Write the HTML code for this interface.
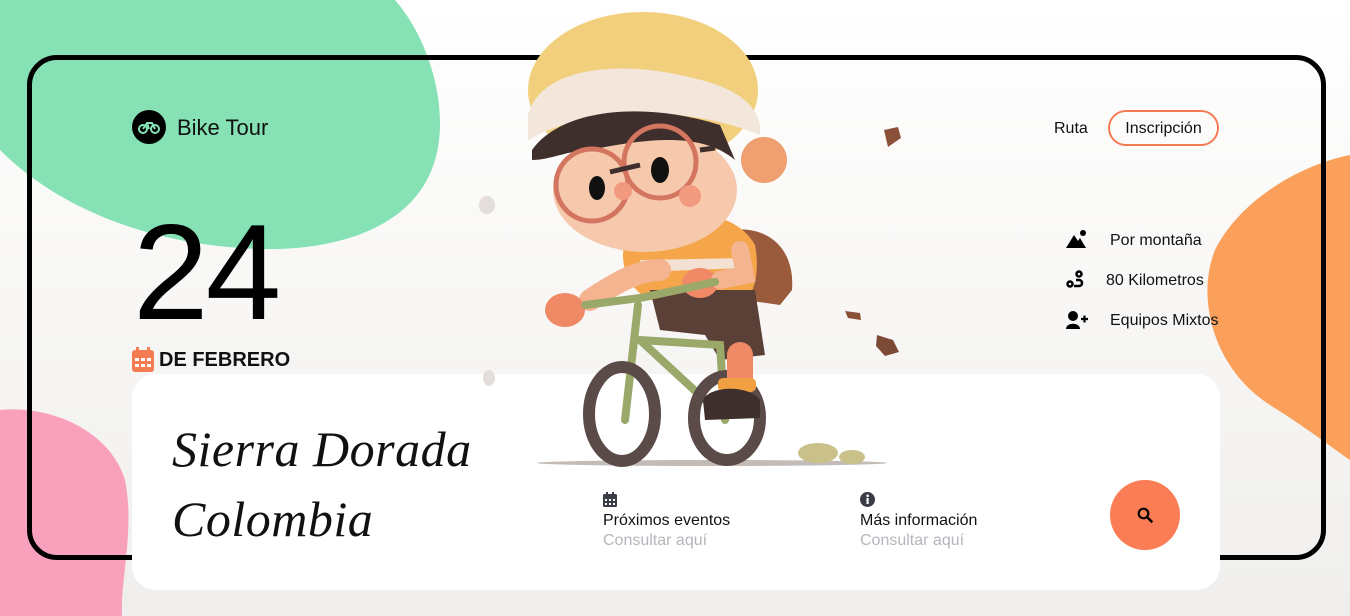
<!DOCTYPE html>
<html><head><meta charset="utf-8"><style>
*{margin:0;padding:0;box-sizing:border-box}
body{width:1350px;height:616px;overflow:hidden;position:relative;font-family:"Liberation Sans","DejaVu Sans",sans-serif;background:linear-gradient(#ffffff 0%,#f6f5f3 60%,#efeeec 100%);color:#111}
.abs{position:absolute}
.frame{left:27px;top:55px;width:1299px;height:505px;border:5px solid #000;border-radius:30px}
.card{left:132px;top:374px;width:1088px;height:216px;background:#fff;border-radius:24px}
.script{font-family:"Liberation Serif",serif;font-style:italic;font-size:50px;color:#111;letter-spacing:0.5px}
.lbl{font-size:16px;color:#111}
.sub{font-size:16px;color:#b3b6bb}
</style></head><body>
<svg class="abs" style="left:0;top:0" width="1350" height="616">
<path d="M0 0 L395 0 C430 40 450 110 435 160 C415 230 330 255 240 248 C150 242 60 210 0 150 Z" fill="#86e1b5"/>
<path d="M1350 155 C1300 165 1240 200 1215 250 C1195 300 1215 370 1270 405 C1310 430 1335 450 1350 460 Z" fill="#fba05a"/>
<path d="M0 410 C50 405 110 430 125 480 C135 530 120 580 122 616 L0 616 Z" fill="#f8a0bc"/>
</svg>
<div class="abs frame"></div>
<div class="abs card"></div>
<svg class="abs" style="left:0;top:0" width="1350" height="616">
<ellipse cx="712" cy="463" rx="175" ry="3" fill="#9a8d85" opacity=".6"/>
<ellipse cx="818" cy="453" rx="20" ry="10" fill="#c9c08a"/>
<ellipse cx="852" cy="457" rx="13" ry="7" fill="#c9c08a"/>
<path d="M884 130 L898 127 L901 138 L888 147Z" fill="#8a5038"/>
<path d="M845 311 L860 313 L861 320 L848 318Z" fill="#8a5038"/>
<path d="M877 335 L893 340 L899 352 L885 356 L876 346Z" fill="#7d4a36"/>
<ellipse cx="487" cy="205" rx="8" ry="9" fill="#e3dedb"/>
<ellipse cx="489" cy="378" rx="6" ry="8" fill="#e3dedb"/>
<path d="M730 230 C770 225 795 250 792 290 L780 305 L745 300 Z" fill="#9a5a3c"/>
<path d="M635 225 C680 205 735 210 755 245 C760 270 755 300 740 300 L650 300 C620 285 615 245 635 225Z" fill="#f5a64a"/>
<path d="M640 260 L745 258 L745 268 L640 272Z" fill="#f3e2d4"/>
<path d="M650 290 L755 290 L765 355 L720 360 L705 335 L660 330Z" fill="#5b4038"/>
<path d="M590 300 C620 280 640 270 660 270" stroke="#f4b490" stroke-width="22" fill="none" stroke-linecap="round"/>
<ellipse cx="565" cy="310" rx="20" ry="17" fill="#f08a66"/>
<ellipse cx="700" cy="283" rx="18" ry="15" fill="#f08a66"/>
<path d="M740 250 L745 275 L720 280" stroke="#f4b490" stroke-width="18" fill="none" stroke-linecap="round"/>
<path d="M585 305 L640 298 L715 282" stroke="#9aa86a" stroke-width="8" fill="none" stroke-linecap="round"/>
<path d="M638 305 L625 420 M640 340 L705 400 M640 340 L720 345 L725 420" stroke="#9aa86a" stroke-width="8" fill="none" stroke-linecap="round"/>
<ellipse cx="622" cy="414" rx="33" ry="47" fill="none" stroke="#5a4a48" stroke-width="12"/>
<ellipse cx="727" cy="418" rx="33" ry="42" fill="none" stroke="#5a4a48" stroke-width="12"/>
<path d="M740 355 L740 385" stroke="#f08a66" stroke-width="26" stroke-linecap="round"/>
<rect x="718" y="378" width="38" height="14" rx="5" fill="#f0a040"/>
<path d="M703 400 C710 385 750 385 760 400 L760 418 L705 420Z" fill="#3e2e2c"/>
<ellipse cx="643" cy="90" rx="115" ry="78" fill="#f2cf7c"/>
<path d="M528 115 C540 70 610 60 680 75 C730 85 755 100 760 125 L760 135 C700 110 600 100 528 140Z" fill="#f3e6da"/>
<ellipse cx="645" cy="190" rx="92" ry="62" fill="#f6c9ac"/>
<circle cx="764" cy="160" r="23" fill="#f0a070"/>
<path d="M532 150 C560 110 640 100 720 125 L735 160 C700 130 640 140 590 150 C570 150 550 160 532 160Z" fill="#3e2e2c"/>
<circle cx="592" cy="185" r="36" fill="none" stroke="#d47560" stroke-width="5"/>
<circle cx="660" cy="162" r="36" fill="none" stroke="#d47560" stroke-width="5"/>
<path d="M610 172 L640 165 M700 150 L715 148" stroke="#3e2e2c" stroke-width="5"/>
<ellipse cx="597" cy="188" rx="8" ry="12" fill="#111"/>
<ellipse cx="660" cy="170" rx="9" ry="13" fill="#111"/>
<circle cx="623" cy="191" r="9" fill="#f29a80"/>
<circle cx="690" cy="196" r="11" fill="#f29a80"/>
</svg>

<svg class="abs" style="left:132px;top:110px" width="34" height="34"><circle cx="17" cy="17" r="17" fill="#000"/>
<g stroke="#86e1b5" stroke-width="2" fill="none"><circle cx="11" cy="19" r="4"/><circle cx="23" cy="19" r="4"/><path d="M11 19 L15 13 L20 13 L23 19 M15 13 L17 19"/></g></svg>
<div class="abs" style="left:177px;top:115px;font-size:22px">Bike Tour</div>
<div class="abs lbl" style="left:1054px;top:120px">Ruta</div>
<div class="abs" style="left:1108px;top:110px;width:111px;height:36px;border:2px solid #f47c52;border-radius:18px;font-size:16px;text-align:center;line-height:33px">Inscripción</div>

<div class="abs" style="left:133px;top:204px;font-size:136px;line-height:1;letter-spacing:-3px;color:#000">24</div>
<svg class="abs" style="left:132px;top:347px" width="22" height="25"><rect x="0" y="3" width="22" height="22" rx="3" fill="#f47c52"/><rect x="4" y="0" width="3" height="6" fill="#f47c52"/><rect x="15" y="0" width="3" height="6" fill="#f47c52"/><g fill="#fff"><rect x="3" y="11" width="4" height="3"/><rect x="9" y="11" width="4" height="3"/><rect x="15" y="11" width="4" height="3"/><rect x="3" y="17" width="4" height="3"/><rect x="9" y="17" width="4" height="3"/><rect x="15" y="17" width="4" height="3"/></g></svg>
<div class="abs" style="left:159px;top:349px;font-size:20px;font-weight:bold">DE FEBRERO</div>

<svg class="abs" style="left:1066px;top:230px" width="22" height="20"><path d="M0 18 L8 5 L12 11 L14 8 L20 18Z" fill="#000"/><circle cx="17" cy="3" r="3" fill="#000"/></svg>
<div class="abs lbl" style="left:1110px;top:232px">Por montaña</div>
<svg class="abs" style="left:1066px;top:270px" width="20" height="20"><g fill="none" stroke="#000" stroke-width="2.5"><circle cx="4" cy="14" r="2.5"/><circle cx="13" cy="4" r="2.5"/><path d="M8 16 L13 16 C17 16 17 10 13 10 L10 10"/></g></svg>
<div class="abs lbl" style="left:1106px;top:272px">80 Kilometros</div>
<svg class="abs" style="left:1066px;top:311px" width="22" height="18"><circle cx="7" cy="5" r="5" fill="#000"/><path d="M0 18 C0 11 14 11 14 18Z" fill="#000"/><path d="M15 8 h7 M18.5 4.5 v7" stroke="#000" stroke-width="2.2"/></svg>
<div class="abs lbl" style="left:1110px;top:312px">Equipos Mixtos</div>

<div class="abs script" style="left:172px;top:420px">Sierra Dorada</div>
<div class="abs script" style="left:172px;top:490px">Colombia</div>

<svg class="abs" style="left:603px;top:492px" width="14" height="15"><rect x="0" y="2" width="14" height="13" rx="1.5" fill="#3a3d46"/><rect x="3" y="0" width="2" height="4" fill="#3a3d46"/><rect x="9" y="0" width="2" height="4" fill="#3a3d46"/><g fill="#fff"><rect x="2" y="7" width="2" height="2"/><rect x="6" y="7" width="2" height="2"/><rect x="10" y="7" width="2" height="2"/><rect x="2" y="11" width="2" height="2"/><rect x="6" y="11" width="2" height="2"/><rect x="10" y="11" width="2" height="2"/></g></svg>
<div class="abs lbl" style="left:603px;top:512px">Próximos eventos</div>
<div class="abs sub" style="left:603px;top:532px">Consultar aquí</div>
<svg class="abs" style="left:860px;top:492px" width="15" height="15"><circle cx="7.5" cy="7.5" r="7.5" fill="#3a3d46"/><rect x="6.5" y="6" width="2.2" height="6" fill="#fff"/><circle cx="7.6" cy="3.8" r="1.3" fill="#fff"/></svg>
<div class="abs lbl" style="left:860px;top:512px">Más información</div>
<div class="abs sub" style="left:860px;top:532px">Consultar aquí</div>

<div class="abs" style="left:1110px;top:480px;width:70px;height:70px;border-radius:50%;background:#fb7d55"></div>
<svg class="abs" style="left:1137px;top:507px" width="16" height="16"><circle cx="6.5" cy="6.5" r="4.8" fill="none" stroke="#000" stroke-width="2.2"/><path d="M10 10 L14.5 14.5" stroke="#000" stroke-width="2.6" stroke-linecap="round"/></svg>
</body></html>
